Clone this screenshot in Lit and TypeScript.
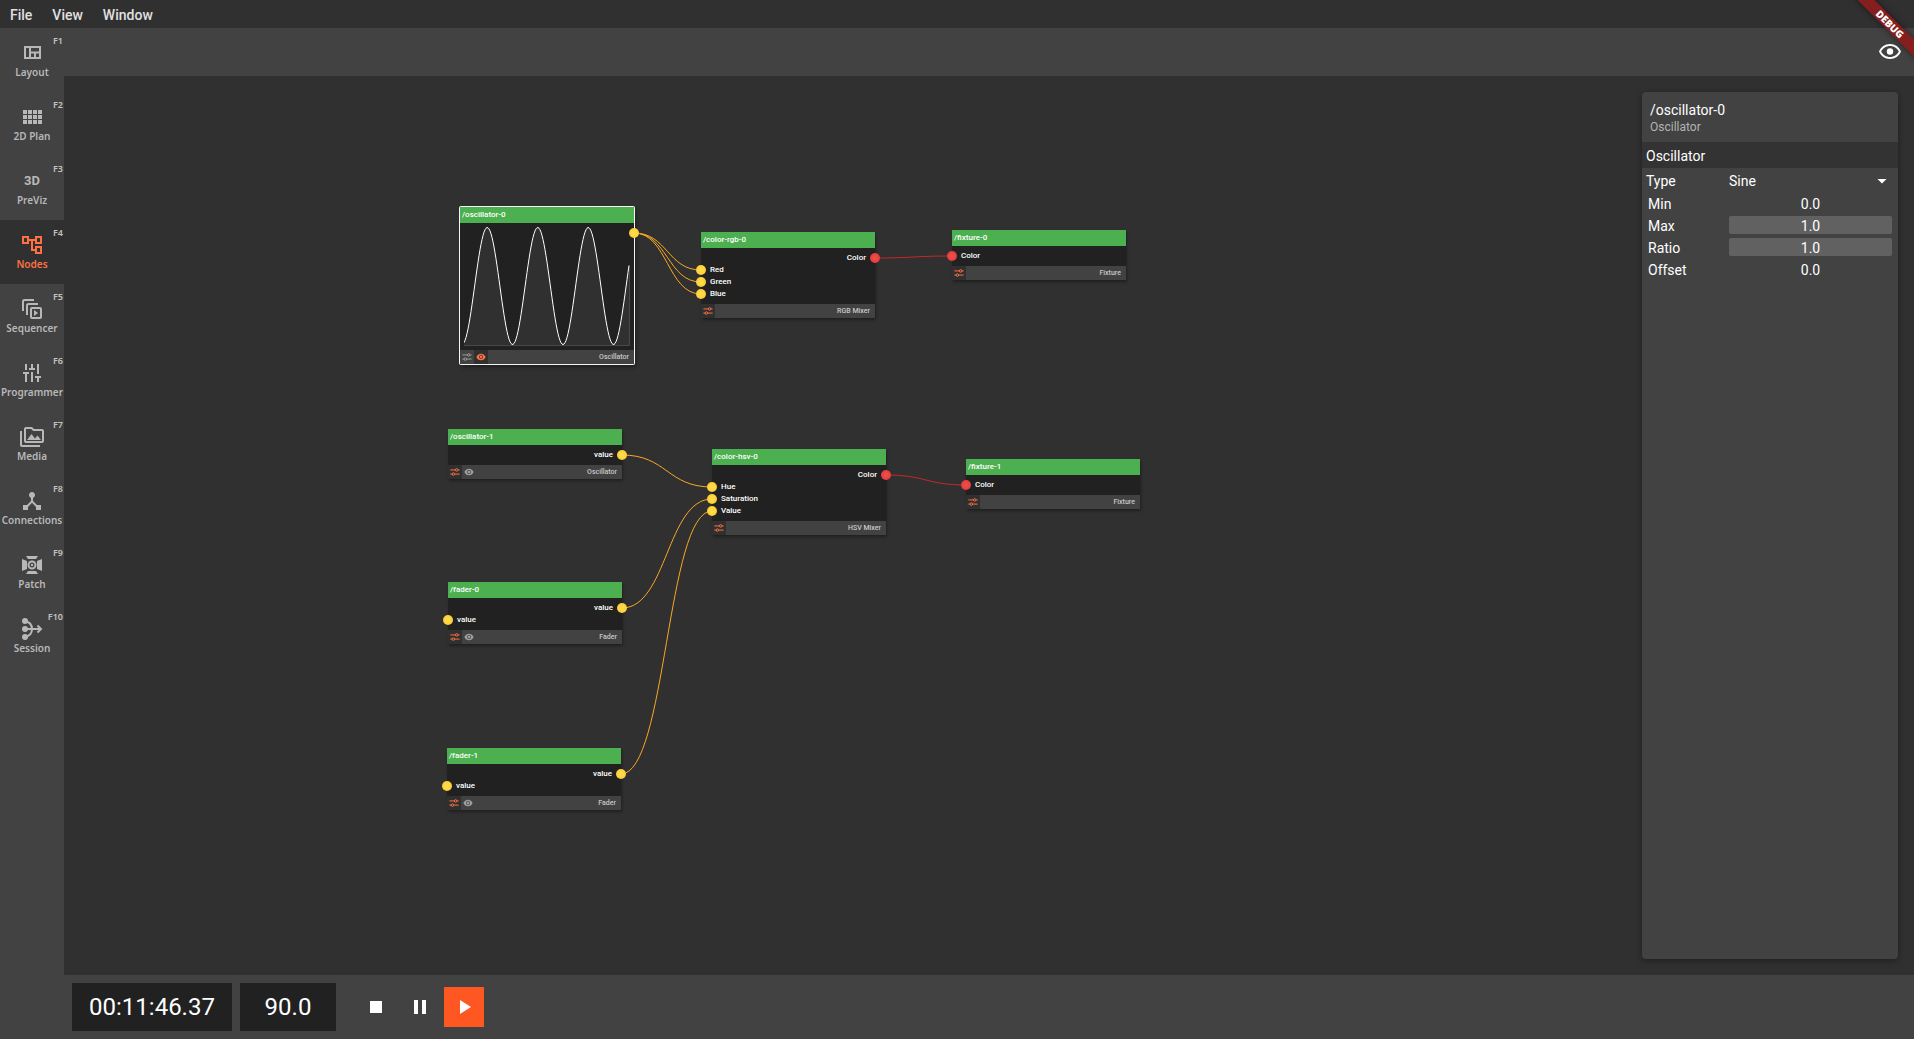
import { LitElement, html, svg, css, nothing, SVGTemplateResult } from "lit";
import { customElement, property, state } from "lit/decorators.js";
import { classMap } from "lit/directives/class-map.js";
import { styleMap } from "lit/directives/style-map.js";

type PortKind = "value" | "color";

interface Port {
  label: string;
  side: "in" | "out";
  kind: PortKind;
}

interface NodeData {
  path: string;
  type: string;
  x: number;
  y: number;
  ports: Port[];
  settings?: boolean;
  preview?: "on" | "off";
  selected?: boolean;
}

interface LinkData {
  kind: PortKind;
  from: [number, number];
  to: [number, number];
}

const icons: Record<string, SVGTemplateResult> = {
  layout: svg`<path fill-rule="evenodd" d="M4 5h17v13H4zM6 7v9h3V7zM11 7v3.5h8V7zM11 12.5V16h3v-3.5zM16 12.5V16h3v-3.5z"/>`,
  plan: svg`<path d="M3 5h4v4H3zM8 5h4v4H8zM13 5h4v4h-4zM18 5h4v4h-4zM3 10h4v4H3zM8 10h4v4H8zM13 10h4v4h-4zM18 10h4v4h-4zM3 15h4v4H3zM8 15h4v4H8zM13 15h4v4h-4zM18 15h4v4h-4z"/>`,
  nodes: svg`<path d="M22 11V3h-7v3H9V3H2v8h7V8h2v10h4v3h7v-8h-7v3h-2V8h2v3h7zM7 9H4V5h3v4zm10 6h3v4h-3v-4zm0-10h3v4h-3V5z"/>`,
  sequencer: svg`<g fill="none" stroke="currentColor" stroke-width="2"><path d="M14 3H4.500Q3 3 3 4.500V14M18 7H8.500Q7 7 7 8.500V18"/><rect x="11" y="11" width="10" height="10" rx="1"/></g><path d="M14 13v6l4-3z"/>`,
  programmer: svg`<path d="M5 3h2v6H5zM3 11h6v2H7v8H5v-8H3zM11 3h2v4h2v2H9V7h2zM11 11h2v10h-2zM17 3h2v10h-2zM15 15h6v2h-2v4h-2v-4h-2z"/>`,
  media: svg`<path d="M2 6H0v14c0 1.100.9 2 2 2h18v-2H2V6zm20-2h-8l-2-2H6c-1.100 0-2 .9-2 2v12c0 1.100.9 2 2 2h16c1.100 0 2-.9 2-2V6c0-1.100-.9-2-2-2zm0 12H6V4h5.170l2 2H22v10zM7 15l4.500-6 3.500 4.510 2.500-3.010L21 15z"/>`,
  connections: svg`<path d="M17 16l-4-4V8.820C14.160 8.400 15 7.300 15 6c0-1.660-1.340-3-3-3S9 4.340 9 6c0 1.300.84 2.400 2 2.820V12l-4 4H3v5h5v-3.050l4-4.200 4 4.200V21h5v-5h-4z"/>`,
  patch: svg`<path d="M6 3h12l-2 3H8zM6 21h12l-2-3H8zM2 6l5 2v8l-5 2zM22 6l-5 2v8l5 2z"/><circle cx="12" cy="12" r="3.500" fill="none" stroke="currentColor" stroke-width="2"/><circle cx="12" cy="12" r="1.200"/>`,
  session: svg`<circle cx="5" cy="4" r="3"/><circle cx="5" cy="12" r="3"/><circle cx="5" cy="20" r="3"/><path fill="none" stroke="currentColor" stroke-width="2" d="M5 4C9.500 5 12 8 12 12S9.500 19 5 20M5 12H21M17.500 8.500L21 12l-3.500 3.500"/>`,
  eye: svg`<path d="M12 6c3.790 0 7.170 2.130 8.820 5.500C19.170 14.870 15.790 17 12 17s-7.170-2.130-8.820-5.500C4.830 8.130 8.210 6 12 6m0-2C7 4 2.730 7.110 1 11.500 2.730 15.890 7 19 12 19s9.270-3.110 11-7.500C21.270 7.110 17 4 12 4z"/><circle cx="12" cy="11.500" r="3.200"/>`,
  eyeSolid: svg`<path fill-rule="evenodd" d="M12 4C7 4 2.500 7.300 1 12c1.500 4.700 6 8 11 8s9.500-3.300 11-8c-1.500-4.700-6-8-11-8zM12 16.800a4.800 4.800 0 1 1 0-9.600 4.800 4.800 0 0 1 0 9.600zm0-8a3.200 3.200 0 1 0 0 6.400 3.200 3.200 0 0 0 0-6.400z"/>`,
  sliders: svg`<g fill="none" stroke="currentColor" stroke-width="2.400"><path d="M1 7h12M19 7h4M1 17h4M11 17h12"/><circle cx="16" cy="7" r="3"/><circle cx="8" cy="17" r="3"/></g>`,
  stop: svg`<path d="M6 6h12v12H6z"/>`,
  pause: svg`<path d="M6 5h4v14H6zM14 5h4v14h-4z"/>`,
  play: svg`<path d="M8 5v14l11-7z"/>`,
};

const icon = (name: string) =>
  html`<svg class="icon ${name}" viewBox="0 0 24 24" fill="currentColor" aria-hidden="true">${icons[name]}</svg>`;

const views = [
  { id: "layout", label: "Layout", key: "F1" },
  { id: "plan", label: "2D Plan", key: "F2" },
  { id: "previz", label: "PreViz", key: "F3" },
  { id: "nodes", label: "Nodes", key: "F4" },
  { id: "sequencer", label: "Sequencer", key: "F5" },
  { id: "programmer", label: "Programmer", key: "F6" },
  { id: "media", label: "Media", key: "F7" },
  { id: "connections", label: "Connections", key: "F8" },
  { id: "patch", label: "Patch", key: "F9" },
  { id: "session", label: "Session", key: "F10" },
];

const input = (label: string, kind: PortKind = "value"): Port => ({ label, side: "in", kind });
const output = (label: string, kind: PortKind = "value"): Port => ({ label, side: "out", kind });

const nodes: NodeData[] = [
  { path: "/oscillator-0", type: "Oscillator", x: 396, y: 131, ports: [output("")], preview: "on", selected: true },
  { path: "/color-rgb-0", type: "RGB Mixer", x: 637, y: 156, settings: true, ports: [output("Color", "color"), input("Red"), input("Green"), input("Blue")] },
  { path: "/fixture-0", type: "Fixture", x: 888, y: 154, settings: true, ports: [input("Color", "color")] },
  { path: "/oscillator-1", type: "Oscillator", x: 384, y: 353, settings: true, preview: "off", ports: [output("value")] },
  { path: "/color-hsv-0", type: "HSV Mixer", x: 648, y: 373, settings: true, ports: [output("Color", "color"), input("Hue"), input("Saturation"), input("Value")] },
  { path: "/fixture-1", type: "Fixture", x: 902, y: 383, settings: true, ports: [input("Color", "color")] },
  { path: "/fader-0", type: "Fader", x: 384, y: 506, settings: true, preview: "off", ports: [output("value"), input("value")] },
  { path: "/fader-1", type: "Fader", x: 383, y: 672, settings: true, preview: "off", ports: [output("value"), input("value")] },
];

const NODE_WIDTH = 174;
const FIRST_PORT = 26;
const PORT_PITCH = 12;

const port = (nodeIndex: number, portIndex: number): [number, number] => {
  const node = nodes[nodeIndex];
  const out = node.ports[portIndex].side === "out";
  return [node.x + (out ? NODE_WIDTH : 0), node.y + FIRST_PORT + portIndex * PORT_PITCH];
};

const links: LinkData[] = [
  { kind: "value", from: port(0, 0), to: port(1, 1) },
  { kind: "value", from: port(0, 0), to: port(1, 2) },
  { kind: "value", from: port(0, 0), to: port(1, 3) },
  { kind: "color", from: port(1, 0), to: port(2, 0) },
  { kind: "value", from: port(3, 0), to: port(4, 1) },
  { kind: "value", from: port(6, 0), to: port(4, 2) },
  { kind: "value", from: port(7, 0), to: port(4, 3) },
  { kind: "color", from: port(4, 0), to: port(5, 0) },
];

const linkPath = ({ from, to }: LinkData) => {
  const mid = (from[0] + to[0]) / 2;
  return `M${from[0]} ${from[1]}C${mid} ${from[1]} ${mid} ${to[1]} ${to[0]} ${to[1]}`;
};

const wave = Array.from({ length: 166 }, (_, x) => {
  const y = 60 + 58.5 * Math.cos((2 * Math.PI * (x + 2)) / 50.5);
  return `${x} ${y.toFixed(2)}`;
}).join("L");

const iconStyles = css`
  .icon {
    display: block;
    width: 24px;
    height: 24px;
    flex: none;
  }
  button {
    appearance: none;
    border: 0;
    padding: 0;
    margin: 0;
    background: none;
    color: inherit;
    font: inherit;
    cursor: pointer;
  }
`;

@customElement("graph-node")
class GraphNode extends LitElement {
  @property({ attribute: false }) data!: NodeData;

  static styles = [
    iconStyles,
    css`
      :host {
        display: block;
        position: absolute;
        width: 174px;
        color: #fff;
        font: 500 8px/12px Roboto, sans-serif;
      }
      .node {
        background: #212121;
        border-radius: 1px;
        box-shadow: 1px 2px 3px rgba(0, 0, 0, 0.35);
      }
      .node.selected {
        box-shadow: 0 0 0 1px #f5f5f5, 2px 3px 4px rgba(0, 0, 0, 0.4);
      }
      .title {
        margin: 0;
        padding: 0 2px;
        font: inherit;
        line-height: 16px;
        background: #4caf50;
      }
      .ports {
        list-style: none;
        margin: 0;
        padding: 4px 0;
      }
      .port {
        position: relative;
        height: 12px;
        padding: 0 9px;
      }
      .port.out {
        text-align: right;
      }
      .dot {
        position: absolute;
        top: 1px;
        left: -5px;
        width: 10px;
        height: 10px;
        border-radius: 50%;
        background: radial-gradient(#ffdd48 20%, #fbc02d);
      }
      .out .dot {
        left: auto;
        right: -5px;
      }
      .color .dot {
        background: radial-gradient(#ef4b48 20%, #d93535);
      }
      .scope {
        position: relative;
        padding: 3px 4px 4px;
      }
      .scope .ports {
        position: absolute;
        inset: 0;
      }
      .wave {
        display: block;
        width: 166px;
        height: 120px;
      }
      .footer {
        display: flex;
        align-items: center;
        height: 14px;
        padding-right: 5px;
        background: #424242;
        color: #c8c8c8;
        font-size: 7px;
      }
      .tool {
        display: grid;
        place-items: center;
        width: 14px;
        height: 14px;
        color: #9e9e9e;
      }
      .tool.on {
        background: #303030;
        color: #ff7043;
      }
      .tool .icon {
        width: 10px;
        height: 10px;
      }
      .type {
        margin-left: auto;
      }
    `,
  ];

  private renderPorts() {
    return html`<ul class="ports">
      ${this.data.ports.map(
        (p) => html`<li class="port ${p.side} ${p.kind}"><span class="dot"></span>${p.label}</li>`
      )}
    </ul>`;
  }

  render() {
    const d = this.data;
    return html`<article class=${classMap({ node: true, selected: !!d.selected })}>
      <h2 class="title">${d.path}</h2>
      ${d.selected
        ? html`<div class="scope">
            <svg class="wave" viewBox="0 0 166 120" aria-hidden="true">
              <path d="M${wave}V120H0Z" fill="#303030" />
              <path d="M0 119.500H165.500V40" fill="none" stroke="#484848" />
              <path d="M${wave}" fill="none" stroke="#fff" />
            </svg>
            ${this.renderPorts()}
          </div>`
        : this.renderPorts()}
      <footer class="footer">
        <button class=${classMap({ tool: true, on: !!d.settings })} aria-label="Settings">${icon("sliders")}</button>
        ${d.preview
          ? html`<button class=${classMap({ tool: true, on: d.preview === "on" })} aria-label="Preview">
              ${icon("eyeSolid")}
            </button>`
          : nothing}
        <span class="type">${d.type}</span>
      </footer>
    </article>`;
  }
}

@customElement("properties-panel")
class PropertiesPanel extends LitElement {
  @state() private fields = [
    { id: "min", label: "Min", value: "0.0" },
    { id: "max", label: "Max", value: "1.0" },
    { id: "ratio", label: "Ratio", value: "1.0" },
    { id: "offset", label: "Offset", value: "0.0" },
  ];

  static styles = css`
    :host {
      display: block;
      width: 256px;
      overflow: hidden;
      border-radius: 4px;
      background: #424242;
      box-shadow: 0 2px 6px rgba(0, 0, 0, 0.35);
      color: #fff;
      font: 400 14px/18px Roboto, sans-serif;
    }
    .head {
      padding: 9px 8px 7px;
    }
    .path,
    .kind,
    .section {
      margin: 0;
      font: inherit;
    }
    .kind {
      font-size: 12px;
      line-height: 16px;
      color: #b3b3b3;
    }
    .section {
      padding: 2px 4px 0;
      line-height: 24px;
      background: #333;
    }
    .row {
      display: flex;
      align-items: center;
      height: 18px;
      padding: 2px 6px;
    }
    .row.type {
      padding: 4px 4px 2px;
    }
    .label {
      width: 81px;
      padding-top: 2px;
    }
    .type .label {
      width: 83px;
      padding-top: 0;
    }
    .number,
    .select {
      flex: 1;
      min-width: 0;
      box-sizing: border-box;
      height: 18px;
      margin: 0;
      padding: 0;
      border: 0;
      border-radius: 2px;
      background: none;
      color: inherit;
      font: inherit;
    }
    .number {
      padding-top: 2px;
      text-align: center;
    }
    .number.set {
      background: #616161;
    }
    .picker {
      flex: 1;
      display: flex;
      align-items: center;
      padding-right: 7px;
    }
    .select {
      appearance: none;
    }
    .caret {
      width: 10px;
      height: 5px;
      background: #fff;
      clip-path: polygon(0 0, 100% 0, 50% 100%);
      pointer-events: none;
    }
  `;

  private edit(index: number, e: Event) {
    const value = (e.target as HTMLInputElement).value;
    this.fields = this.fields.map((f, i) => (i === index ? { ...f, value } : f));
  }

  render() {
    return html`
      <header class="head">
        <h2 class="path">/oscillator-0</h2>
        <p class="kind">Oscillator</p>
      </header>
      <h3 class="section">Oscillator</h3>
      <div class="row type">
        <label class="label" for="type">Type</label>
        <div class="picker">
          <select class="select" id="type">
            <option>Sine</option>
          </select>
          <span class="caret"></span>
        </div>
      </div>
      ${this.fields.map(
        (f, i) => html`<div class="row">
          <label class="label" for=${f.id}>${f.label}</label>
          <input
            class=${classMap({ number: true, set: Number(f.value) > 0 })}
            id=${f.id}
            type="text"
            inputmode="decimal"
            .value=${f.value}
            @change=${(e: Event) => this.edit(i, e)}
          />
        </div>`
      )}
    `;
  }
}

@customElement("app-root")
class AppRoot extends LitElement {
  @state() private view = "nodes";
  @state() private transport = "play";

  static styles = [
    iconStyles,
    css`
      :host {
        position: relative;
        display: flex;
        flex-direction: column;
        height: 100vh;
        overflow: hidden;
        background: #303030;
        color: #fff;
        font: 400 14px/18px Roboto, sans-serif;
      }
      .menu {
        display: flex;
        height: 28px;
      }
      .menu-item {
        padding: 2px 10px 0;
        font-weight: 500;
        color: #e0e0e0;
      }
      .body {
        flex: 1;
        min-height: 0;
        display: flex;
      }
      .rail {
        flex: none;
        display: flex;
        flex-direction: column;
        width: 64px;
        background: #424242;
      }
      .view {
        position: relative;
        display: flex;
        flex-direction: column;
        align-items: center;
        height: 64px;
        padding-top: 13px;
        color: #b8b8b8;
        font: 600 10px/14px "Noto Sans", sans-serif;
      }
      .view.active {
        background: #303030;
        color: #ff7043;
      }
      .key {
        position: absolute;
        top: 7px;
        right: 1px;
        font-size: 9px;
        line-height: 12px;
        color: #c2c2c2;
      }
      .glyph {
        height: 24px;
        font: 700 13px/24px Roboto, sans-serif;
      }
      .main {
        flex: 1;
        min-width: 0;
        display: flex;
        flex-direction: column;
      }
      .toolbar {
        display: flex;
        align-items: center;
        justify-content: flex-end;
        height: 48px;
        padding-right: 12px;
        background: #424242;
      }
      .workspace {
        position: relative;
        flex: 1;
        min-height: 0;
        display: flex;
        justify-content: flex-end;
        padding: 16px;
        overflow: hidden;
      }
      .links {
        position: absolute;
        inset: 0;
        width: 100%;
        height: 100%;
        fill: none;
        stroke: #f9a825;
        pointer-events: none;
      }
      .links .color {
        stroke: #c62828;
      }
      .transport {
        display: flex;
        align-items: center;
        gap: 4px;
        height: 64px;
        padding: 0 8px;
        box-sizing: border-box;
        background: #424242;
      }
      .readouts {
        display: flex;
        gap: 8px;
        margin-right: 16px;
      }
      .readout {
        width: 96px;
        background: #212121;
        font-size: 24px;
        line-height: 48px;
        text-align: center;
      }
      .readout.time {
        width: 160px;
      }
      .control {
        display: grid;
        place-items: center;
        width: 40px;
        height: 40px;
      }
      .control.on {
        background: #ff5722;
      }
      .corner {
        position: absolute;
        top: 0;
        right: 0;
        width: 80px;
        height: 80px;
        overflow: hidden;
        pointer-events: none;
      }
      .ribbon {
        position: absolute;
        top: 18px;
        left: 12px;
        width: 88px;
        background: #851e1e;
        box-shadow: 0 0 6px rgba(0, 0, 0, 0.5);
        font: 900 10px/12px "Noto Sans", sans-serif;
        text-align: center;
        rotate: 45deg;
      }
    `,
  ];

  render() {
    return html`
      <nav class="menu" aria-label="Menu">
        ${["File", "View", "Window"].map((m) => html`<button class="menu-item">${m}</button>`)}
      </nav>
      <div class="body">
        <nav class="rail" aria-label="Views">
          ${views.map(
            (v) => html`<button
              class=${classMap({ view: true, active: v.id === this.view })}
              @click=${() => (this.view = v.id)}
            >
              ${v.id === "previz" ? html`<span class="glyph">3D</span>` : icon(v.id)}
              <span>${v.label}</span>
              <span class="key">${v.key}</span>
            </button>`
          )}
        </nav>
        <div class="main">
          <div class="toolbar">
            <button aria-label="Toggle visibility">${icon("eye")}</button>
          </div>
          <main class="workspace">
            <svg class="links" aria-hidden="true">
              ${links.map((l) => svg`<path class=${l.kind} d=${linkPath(l)} />`)}
            </svg>
            ${nodes.map(
              (n) => html`<graph-node .data=${n} style=${styleMap({ left: `${n.x}px`, top: `${n.y}px` })}></graph-node>`
            )}
            <properties-panel></properties-panel>
          </main>
          <footer class="transport">
            <div class="readouts">
              <div class="readout time">00:11:46.37</div>
              <div class="readout">90.0</div>
            </div>
            ${["stop", "pause", "play"].map(
              (t) => html`<button
                class=${classMap({ control: true, on: t === this.transport })}
                aria-label=${t}
                @click=${() => (this.transport = t)}
              >
                ${icon(t)}
              </button>`
            )}
          </footer>
        </div>
      </div>
      <div class="corner"><div class="ribbon">DEBUG</div></div>
    `;
  }
}
